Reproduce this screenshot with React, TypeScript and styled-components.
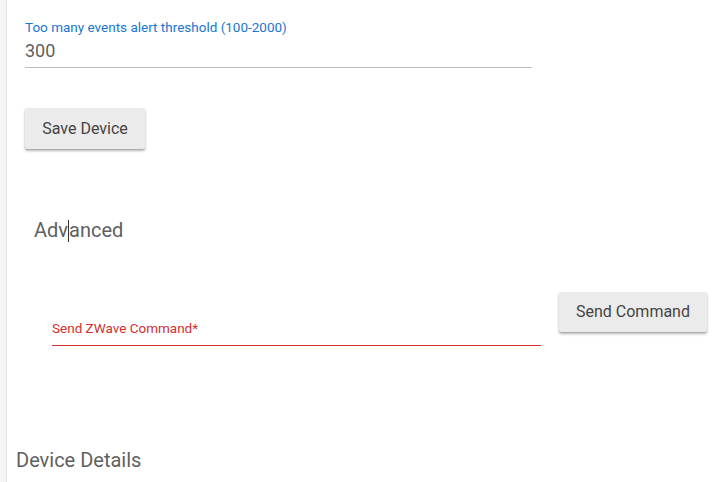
import React from "react";
import styled, { createGlobalStyle } from "styled-components";

const GlobalStyle = createGlobalStyle`
  html, body {
    margin: 0;
    padding: 0;
    background: #f5f5f5;
    font-family: Roboto, "Liberation Sans", Arial, sans-serif;
    overflow: hidden;
  }
`;

const Page = styled.div`
  height: 482px;
  padding-left: 6px;
  display: flex;
`;

const Card = styled.main`
  flex: 1;
  background: #ffffff;
  border-left: 1px solid #e6e6e6;
  display: flex;
  flex-direction: column;
  padding-top: 19px;
`;

const Field = styled.div<{ $error?: boolean; $width: number }>`
  width: ${(p) => p.$width}px;
  display: flex;
  flex-direction: column;
  border-bottom: 1px solid ${(p) => (p.$error ? "#d32f2f" : "#bdbdbd")};
`;

const Label = styled.label<{ $error?: boolean }>`
  font-size: 13.5px;
  line-height: 16px;
  color: ${(p) => (p.$error ? "#d32f2f" : "#1976d2")};
`;

const Value = styled.div`
  font-size: 18px;
  line-height: 24px;
  color: #5f5f5f;
  padding-top: 4px;
  padding-bottom: 4px;
`;

const ThresholdSection = styled.section`
  padding-left: 18px;
  display: flex;
  flex-direction: column;
  align-items: flex-start;
`;

const Button = styled.button`
  font-family: inherit;
  font-size: 16px;
  color: #444444;
  background: #ebebeb;
  border: none;
  border-radius: 2px;
  height: 41px;
  padding: 0 18px;
  box-shadow: 0 2px 3px rgba(0, 0, 0, 0.28), 0 1px 1px rgba(0, 0, 0, 0.12);
  cursor: pointer;
`;

const SaveButton = styled(Button)`
  margin-top: 40px;
  width: 120px;
  padding: 0;
`;

const SectionTitle = styled.h2<{ $indent: number }>`
  margin: 0;
  font-size: 20px;
  line-height: 24px;
  font-weight: 400;
  color: #5f5f5f;
  padding-left: ${(p) => p.$indent}px;
`;

const AdvancedTitle = styled(SectionTitle)`
  margin-top: 69px;
`;

const Caret = styled.span`
  display: inline-block;
  width: 1px;
  height: 22px;
  background: #333;
  vertical-align: -5px;
`;

const CommandRow = styled.div`
  margin-top: 50px;
  padding-left: 45px;
  display: flex;
  align-items: flex-start;
  gap: 18px;
`;

const CommandField = styled(Field)`
  padding-top: 28px;
  padding-bottom: 9px;
`;

const SendButton = styled(Button)`
  width: 148px;
  height: 40px;
  padding: 0 0 2px;
`;

const DetailsTitle = styled(SectionTitle)`
  margin-top: 102px;
`;

const Divider = styled.div`
  margin: 10px 0 0 10px;
  border-top: 1px solid #ededed;
`;

export default function App() {
  return (
    <>
      <GlobalStyle />
      <Page>
        <Card>
          <ThresholdSection>
            <Field $width={507}>
              <Label>Too many events alert threshold (100-2000)</Label>
              <Value>300</Value>
            </Field>
            <SaveButton>Save Device</SaveButton>
          </ThresholdSection>

          <AdvancedTitle $indent={27}>
            Adv<Caret />anced
          </AdvancedTitle>

          <CommandRow>
            <CommandField $width={489} $error>
              <Label $error>Send ZWave Command*</Label>
            </CommandField>
            <SendButton>Send Command</SendButton>
          </CommandRow>

          <DetailsTitle $indent={9}>Device Details</DetailsTitle>
          <Divider />
        </Card>
      </Page>
    </>
  );
}
